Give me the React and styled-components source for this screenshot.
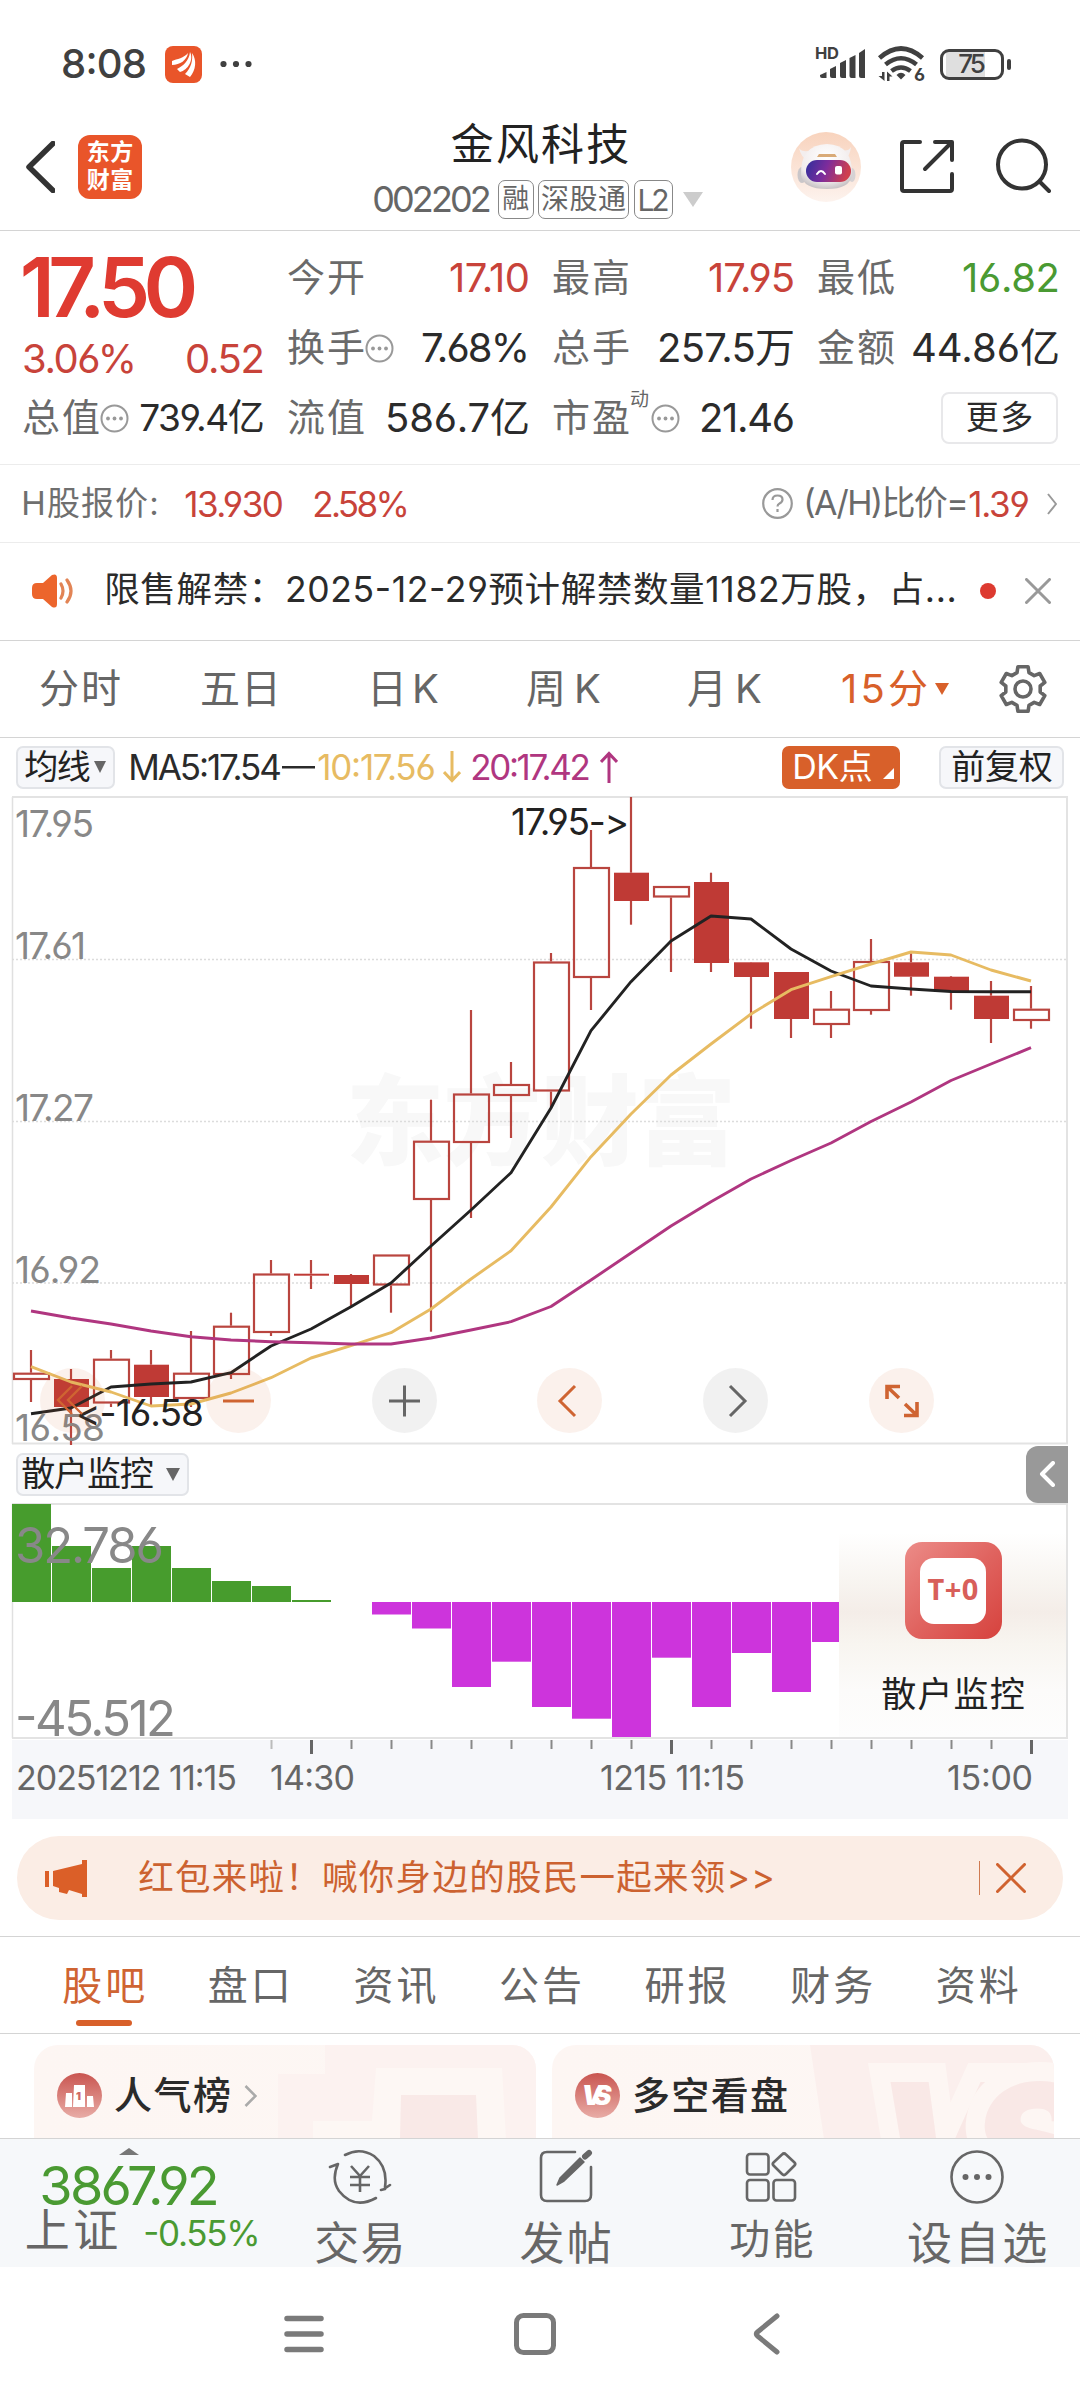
import React, { useLayoutEffect, useRef, useState } from 'react'
import styled, { createGlobalStyle, css } from 'styled-components'

const FONT = `Inter, "Noto Sans CJK SC", sans-serif`
const RED = '#c8433a'
const GREEN = '#4a9a32'
const ORANGE = '#d8602a'
const GREY = '#666'
const DARK = '#2b2b2b'
const UP = '#b9453f'
const SOLID = '#bf3a35'

const GlobalStyle = createGlobalStyle`
  * { box-sizing: border-box; }
  body { margin: 0; background: #fff; }
  svg { display: block; flex: none; }
`

/* ---------- text that spaces itself to the width of its slot ---------- */

const Slot = styled.span`
  display: block;
  flex: none;
  width: ${p => p.$w}px;
  height: 1.2em;
  line-height: 1.2em;
  font-size: ${p => p.$size}px;
  font-weight: ${p => p.$weight || 400};
  color: ${p => p.$color || GREY};
  white-space: nowrap;
`
const SlotText = styled.span`
  display: inline-block;
  margin-left: -0.05em;
`

function Fit({ w, size, color, weight, children, className }) {
  const ref = useRef(null)
  const [spacing, setSpacing] = useState(0)
  useLayoutEffect(() => {
    const el = ref.current
    el.style.letterSpacing = '0px'
    const natural = el.getBoundingClientRect().width
    const n = [...children].length
    const next = (w + size * 0.1 - natural) / Math.max(1, n - 1)
    el.style.letterSpacing = `${next}px`
    setSpacing(next)
  }, [w, size, children])
  return (
    <Slot className={className} $w={w} $size={size} $color={color} $weight={weight}>
      <SlotText ref={ref} style={{ letterSpacing: spacing }}>{children}</SlotText>
    </Slot>
  )
}

const Page = styled.div`
  width: 1080px;
  height: 2400px;
  overflow: hidden;
  display: flex;
  flex-direction: column;
  background: #fff;
  font-family: ${FONT};
  font-feature-settings: "calt" 1, "cv03" 1, "cv04" 1;
`

/* ---------- status bar ---------- */

const StatusRow = styled.div`
  height: 120px;
  padding: 8px 69px 0 63px;
  display: flex;
  align-items: center;
`
const AppIcon = styled.svg`
  margin: 0 18px 0 20px;
`
const Spacer = styled.div`
  flex: 1;
`
const Battery = styled.div`
  width: 64px;
  height: 31px;
  margin-left: 15px;
  border: 3.5px solid #404040;
  border-radius: 9px;
  display: flex;
  align-items: center;
  justify-content: center;
  background: linear-gradient(90deg, #fff 3px, #dfdfdf 3px, #dfdfdf 42px, #fff 42px);
`
const BatteryCap = styled.div`
  width: 4px;
  height: 11px;
  margin-left: 3px;
  border-radius: 2px;
  background: #404040;
`

function StatusBar() {
  return (
    <StatusRow>
      <Fit w={82} size={40} color="#404040" weight={500}>8:08</Fit>
      <AppIcon width="37" height="37" viewBox="0 0 37 37">
        <rect width="37" height="37" rx="8" fill="#e9552a" />
        <path d="M7 15C12 13 19 12 23 7C22 14 15 19 7 19Z" fill="#fff" />
        <path d="M12 23C18 20 24 15 25 6C29 14 23 24 15 26Z" fill="#fff" />
        <path d="M20 28C26 22 28 15 27 7C32 14 31 24 25 31Z" fill="#fff" />
      </AppIcon>
      <svg width="32" height="8" viewBox="0 0 32 8" fill="#404040">
        <circle cx="3.5" cy="4" r="3.1" /><circle cx="16" cy="4" r="3.1" /><circle cx="28.5" cy="4" r="3.1" />
      </svg>
      <Spacer />
      <svg width="110" height="38" viewBox="816 46 110 38" fill="#404040">
        <text x="816" y="60" fontFamily={FONT} fontSize="16.5" fontWeight="700" textLength="24">HD</text>
        <path d="M821 76L827.5 73V79H823Q821 79 821 77Z" />
        <path d="M831 70L837 67V79H833Q831 79 831 77Z" />
        <path d="M841 64L847 61V79H843Q841 79 841 77Z" />
        <path d="M850.5 59L856.5 56V79H852.500Q850.500 79 850.500 77Z" />
        <path d="M860 54L866 50V79H862Q860 79 860 77Z" />
        <g fill="none" stroke="#404040" strokeWidth="4.6">
          <path d="M880.5 59Q902 40 923.500 59" />
          <path d="M886.500 65.500Q902 53 917.500 65.500" />
          <path d="M892.500 72Q902 65 911.500 72" />
        </g>
        <path d="M897.500 76Q902 71.500 906.500 76L902 80.500Z" />
        <path d="M883 73h2.500v9L879.500 77h3.500zM888 82V72.500l5.500 5H890.500V82z" />
        <text x="915" y="82" fontFamily={FONT} fontSize="18" fontWeight="700">6</text>
      </svg>
      <Battery><Fit w={25} size={26} color="#404040" weight={500}>75</Fit></Battery>
      <BatteryCap />
    </StatusRow>
  )
}

/* ---------- header ---------- */

const HeaderRow = styled.header`
  height: 111px;
  padding: 0 29px 0 26px;
  display: grid;
  grid-template-columns: 348px 331px 1fr;
  border-bottom: 1px solid #d4d4d4;
`
const HeaderLeft = styled.div`
  height: 94px;
  display: flex;
  align-items: center;
  gap: 23px;
`
const Brand = styled.div`
  width: 64px;
  height: 64px;
  border-radius: 12px;
  background: #e9552a;
  display: flex;
  flex-direction: column;
  align-items: center;
  justify-content: center;
`
const TitleBlock = styled.div`
  display: flex;
  flex-direction: column;
`
const StockName = styled(Fit)`
  margin: -1px 0 0 79px;
`
const CodeLine = styled.div`
  height: 40px;
  margin-top: 9px;
  display: flex;
  align-items: center;
`
const Tag = styled.div`
  width: ${p => p.$w}px;
  height: 39px;
  margin-left: ${p => p.$gap}px;
  border: 1.500px solid #888;
  border-radius: 7px;
  display: flex;
  align-items: center;
  justify-content: center;
`
const Triangle = styled.i`
  display: block;
  flex: none;
  border: ${p => p.$w / 2}px solid transparent;
  border-top: ${p => p.$h}px solid ${p => p.$color};
  border-bottom: 0;
  margin-left: ${p => p.$gap || 0}px;
`
const HeaderRight = styled.div`
  height: 94px;
  display: flex;
  align-items: center;
  justify-content: flex-end;
`

function Header() {
  return (
    <HeaderRow>
      <HeaderLeft>
        <svg width="29" height="52" viewBox="0 0 29 52">
          <path d="M27 2.500L3 26L27 49.500" fill="none" stroke="#333" strokeWidth="5.500" strokeLinecap="round" strokeLinejoin="round" />
        </svg>
        <Brand>
          <Fit w={44} size={23} color="#fff" weight={700}>东方</Fit>
          <Fit w={44} size={23} color="#fff" weight={700}>财富</Fit>
        </Brand>
      </HeaderLeft>
      <TitleBlock>
        <StockName w={174} size={43} color="#222">金风科技</StockName>
        <CodeLine>
          <Fit w={116} size={36} color={GREY}>002202</Fit>
          <Tag $w={36} $gap={8}><Fit w={25} size={27}>融</Fit></Tag>
          <Tag $w={91} $gap={4}><Fit w={82} size={28}>深股通</Fit></Tag>
          <Tag $w={39} $gap={5}><Fit w={29} size={30}>L2</Fit></Tag>
          <Triangle $w={21} $h={15} $color="#ccc" $gap={10} />
        </CodeLine>
      </TitleBlock>
      <HeaderRight>
        <svg width="70" height="70" viewBox="0 0 70 70">
          <defs>
            <linearGradient id="peach" x1="0" y1="0" x2="0" y2="1">
              <stop offset="0" stopColor="#f8d3bd" /><stop offset="1" stopColor="#fdf3ee" />
            </linearGradient>
            <linearGradient id="visor" x1="0" y1="0" x2="1" y2="0.2">
              <stop offset="0" stopColor="#2f2f9c" /><stop offset="0.5" stopColor="#7d2c9c" /><stop offset="1" stopColor="#cf3f4e" />
            </linearGradient>
            <radialGradient id="shell" cx="0.5" cy="0.3" r="0.7">
              <stop offset="0" stopColor="#fff" /><stop offset="0.75" stopColor="#f1ecec" /><stop offset="1" stopColor="#c9c4c6" />
            </radialGradient>
          </defs>
          <circle cx="35" cy="35" r="35" fill="url(#peach)" />
          <path d="M8 16Q10 25 16 28L24 17Q12 22 8 16ZM60 15Q59 24 54 27L46 17Q57 21 60 15Z" fill="#f3eeee" />
          <ellipse cx="11" cy="43" rx="4.500" ry="8" fill="#c9c6c9" />
          <ellipse cx="61" cy="43" rx="3.500" ry="7" fill="#d6d2d4" />
          <path d="M10 43Q9 13 36 12Q62 13 61 43Q59 57 36 57Q12 57 10 43Z" fill="url(#shell)" />
          <path d="M28 22h16l2 3H26z" fill="#d9ab78" />
          <rect x="15" y="28" width="45" height="22" rx="11" fill="url(#visor)" />
          <path d="M26 42q4-6 8 0" fill="none" stroke="#fff" strokeWidth="2" strokeLinecap="round" />
          <rect x="44" y="34" width="7" height="8.500" rx="2" fill="#fff" />
        </svg>
        <svg width="130" height="70" viewBox="861 132 130 70" fill="none" stroke="#333" strokeWidth="4" strokeLinecap="round" strokeLinejoin="round">
          <path d="M920 142H904Q902 142 902 144V189Q902 191 904 191H950Q952 191 952 189V174" />
          <path d="M935 142H952V160M951 143L925 169" />
        </svg>
        <svg width="60" height="70" viewBox="991 132 60 70" fill="none" stroke="#333" strokeWidth="4" strokeLinecap="round">
          <circle cx="1022" cy="164.500" r="24" /><path d="M1040 182L1049 191" />
        </svg>
      </HeaderRight>
    </HeaderRow>
  )
}

/* ---------- quote ---------- */

const QuoteGrid = styled.section`
  height: 234px;
  padding: 12px 22px 0 24px;
  display: flex;
  justify-content: space-between;
  border-bottom: 1px solid #ececec;
`
const QuoteCol = styled.div`
  width: 239px;
`
const Line = styled.div`
  height: ${p => p.$h || 70}px;
  display: flex;
  align-items: center;
  justify-content: space-between;
`
const LabelGroup = styled.div`
  display: flex;
  align-items: center;
  gap: 2px;
`
const Sup = styled.div`
  align-self: flex-start;
  margin: -6px 0 0 1px;
`
const MoreButton = styled.button`
  width: 117px;
  height: 52px;
  margin-left: auto;
  padding: 0;
  border: 2px solid #e8e8ea;
  border-radius: 8px;
  background: #fff;
  font: inherit;
  font-feature-settings: inherit;
  display: flex;
  align-items: center;
  justify-content: center;
`

const Dots = () => (
  <svg width="29" height="29" viewBox="0 0 29 29" fill="#999">
    <circle cx="14.500" cy="14.500" r="13" fill="none" stroke="#999" strokeWidth="2" />
    <circle cx="8" cy="14.500" r="1.900" /><circle cx="14.500" cy="14.500" r="1.900" /><circle cx="21" cy="14.500" r="1.900" />
  </svg>
)

function Item({ label, value, w, color = DARK, dots, sup, size = 40, h }) {
  return (
    <Line $h={h}>
      <LabelGroup>
        <Fit w={74} size={38} color="#6a6a6a">{label}</Fit>
        {sup && <Sup><Fit w={18} size={19}>{sup}</Fit></Sup>}
        {dots && <Dots />}
      </LabelGroup>
      <Fit w={w} size={size} color={color}>{value}</Fit>
    </Line>
  )
}

function Quote() {
  return (
    <QuoteGrid>
      <QuoteCol>
        <Line $h={90}><Fit w={170} size={83} color="#df3b31" weight={600}>17.50</Fit></Line>
        <Line $h={51}>
          <Fit w={111} size={40} color={RED}>3.06%</Fit>
          <Fit w={76} size={40} color={RED}>0.52</Fit>
        </Line>
        <Item label="总值" value="739.4亿" w={122} size={37} dots h={68} />
      </QuoteCol>
      <QuoteCol>
        <Item label="今开" value="17.10" w={77} color={RED} />
        <Item label="换手" value="7.68%" w={105} dots />
        <Item label="流值" value="586.7亿" w={141} />
      </QuoteCol>
      <QuoteCol>
        <Item label="最高" value="17.95" w={83} color={RED} />
        <Item label="总手" value="257.5万" w={134} />
        <Item label="市盈" value="21.46" w={92} sup="动" dots />
      </QuoteCol>
      <QuoteCol>
        <Item label="最低" value="16.82" w={94} color={GREEN} />
        <Item label="金额" value="44.86亿" w={145} />
        <Line><MoreButton><Fit w={64} size={33} color={DARK}>更多</Fit></MoreButton></Line>
      </QuoteCol>
    </QuoteGrid>
  )
}

const HShareRow = styled.div`
  height: 78px;
  padding: 0 23px;
  display: flex;
  align-items: center;
  border-bottom: 1px solid #ececec;
`
const Gap = styled.div`
  flex: none;
  width: ${p => p.$w}px;
`

function HShare() {
  return (
    <HShareRow>
      <Fit w={134} size={33} color="#6f6f6f">H股报价:</Fit>
      <Gap $w={29} />
      <Fit w={96} size={35} color={RED}>13.930</Fit>
      <Gap $w={32} />
      <Fit w={94} size={35} color={RED}>2.58%</Fit>
      <Spacer />
      <svg width="31" height="31" viewBox="0 0 31 31" fill="none" stroke="#999" strokeWidth="2.200">
        <circle cx="15.500" cy="15.500" r="14.300" />
        <path d="M10.500 12Q10.500 7.500 15.500 7.500Q20.500 7.500 20.500 11.500Q20.500 14 17.500 15.500Q15.500 16.500 15.500 18.500M15.500 21V24" />
      </svg>
      <Gap $w={12} />
      <Fit w={162} size={34} color="#6a6a6a">(A/H)比价=</Fit>
      <Gap $w={3} />
      <Fit w={58} size={35} color={RED}>1.39</Fit>
      <Gap $w={19} />
      <svg width="10" height="22" viewBox="0 0 10 22">
        <path d="M1 1L9 11L1 21" fill="none" stroke="#999" strokeWidth="2" />
      </svg>
    </HShareRow>
  )
}

const NoticeRow = styled.div`
  height: 98px;
  padding: 0 29px 2px 32px;
  display: flex;
  align-items: center;
  border-bottom: 1px solid #d4d4d4;
`
const RedDot = styled.div`
  width: 16px;
  height: 16px;
  margin: 0 29px 0 25px;
  border-radius: 50%;
  background: #dd3a30;
`

function Notice() {
  return (
    <NoticeRow>
      <svg width="41" height="34" viewBox="0 0 41 34">
        <path d="M5 9H11L20 1Q25 -1 25 4V30Q25 35 20 33L11 25H5Q0 25 0 20V14Q0 9 5 9Z" fill="#ec652c" />
        <path d="M29 10Q33 17 29 24M35 6Q43 17 35 28" fill="none" stroke="#e28455" strokeWidth="3.200" strokeLinecap="round" />
      </svg>
      <Gap $w={33} />
      <Fit w={849} size={35.5} color={DARK}>限售解禁：2025-12-29预计解禁数量1182万股，占...</Fit>
      <RedDot />
      <svg width="26" height="26" viewBox="0 0 26 26">
        <path d="M1.500 1.500L24.500 24.500M24.500 1.500L1.500 24.500" stroke="#999" strokeWidth="3" strokeLinecap="round" />
      </svg>
    </NoticeRow>
  )
}

/* ---------- period tabs ---------- */

const PeriodRow = styled.nav`
  height: 97px;
  padding: 0 33px 0 41px;
  display: flex;
  align-items: center;
  border-bottom: 1px solid #d4d4d4;
`

const gear = (() => {
  const pts = []
  for (let k = 0; k < 6; k++) {
    ;[[-20, 17.5], [-13, 22.8], [13, 22.8], [20, 17.5]].forEach(([d, r]) => {
      const a = ((k * 60 - 90 + d) * Math.PI) / 180
      pts.push(`${(24 + r * Math.cos(a)).toFixed(1)},${(24 + r * Math.sin(a)).toFixed(1)}`)
    })
  }
  return pts.join(' ')
})()

function Periods() {
  return (
    <PeriodRow>
      <Fit w={78} size={40}>分时</Fit><Gap $w={83} />
      <Fit w={77} size={40}>五日</Fit><Gap $w={90} />
      <Fit w={68} size={40}>日K</Fit><Gap $w={91} />
      <Fit w={71} size={40}>周K</Fit><Gap $w={90} />
      <Fit w={71} size={40}>月K</Fit><Gap $w={83} />
      <Fit w={83} size={40} color={ORANGE}>15分</Fit>
      <Triangle $w={14} $h={12} $color={ORANGE} $gap={9} />
      <Spacer />
      <svg width="48" height="48" viewBox="0 0 48 48" fill="none" stroke={GREY} strokeWidth="3.600" strokeLinejoin="round">
        <polygon points={gear} /><circle cx="24" cy="24" r="8" />
      </svg>
    </PeriodRow>
  )
}

/* ---------- main chart ---------- */

const MaRow = styled.div`
  height: 58px;
  padding: 0 16px;
  display: flex;
  align-items: center;
`
const chip = css`
  height: 43px;
  flex: none;
  border-radius: 7px;
  display: flex;
  align-items: center;
  width: ${p => p.$w}px;
  padding-left: ${p => p.$pad}px;
`
const Chip = styled.div`
  ${chip}
  border: 2px solid #e2e4e8;
  background: #f6f7fa;
`
const DkChip = styled.div`
  ${chip}
  background: ${ORANGE};
`
const Corner = styled.i`
  margin: 12px 0 0 12px;
  border-left: 11px solid transparent;
  border-bottom: 11px solid #fff;
`

const MaArrow = ({ up, color }) => (
  <svg width="18" height="32" viewBox="0 0 18 32" fill="none" stroke={color} strokeWidth="3">
    <path d={up ? 'M9 32V2M1 11L9 2.500L17 11' : 'M9 0V30M1 21L9 29.500L17 21'} />
  </svg>
)

function MaBar() {
  return (
    <MaRow>
      <Chip $w={99} $pad={8}>
        <Fit w={63} size={34} color="#222">均线</Fit>
        <Triangle $w={13} $h={12} $color={GREY} $gap={5} />
      </Chip>
      <Gap $w={15} />
      <Fit w={150} size={35} color={DARK}>MA5:17.54</Fit>
      <svg width="36" height="4"><rect x="2" y="1" width="33" height="2.500" fill="#2b2b2b" /></svg>
      <Gap $w={3} />
      <Fit w={115} size={35} color="#e7bb62">10:17.56</Fit>
      <Gap $w={9} /><MaArrow color="#e7bb62" /><Gap $w={11} />
      <Fit w={117} size={35} color="#b03680">20:17.42</Fit>
      <Gap $w={11} /><MaArrow up color="#b03680" />
      <Spacer />
      <DkChip $w={118} $pad={12}>
        <Fit w={77} size={34} color="#fff">DK点</Fit>
        <Corner />
      </DkChip>
      <Gap $w={39} />
      <Chip $w={125} $pad={12}><Fit w={98} size={34} color="#222">前复权</Fit></Chip>
    </MaRow>
  )
}

// [body top, body bottom, high, low, solid]
const CANDLES = [
  [1372.7, 1380, 1350, 1402, 0], [1379, 1407, 1369, 1445, 1], [1358.7, 1403.5, 1350, 1407, 0],
  [1364.7, 1397, 1350, 1405, 1], [1372.7, 1399, 1331, 1407, 0], [1325.7, 1375, 1312.7, 1379, 0],
  [1273.5, 1333, 1260, 1336, 0], [1273.7, 1275.7, 1260, 1289, 1], [1275, 1284, 1274, 1307, 1],
  [1254.5, 1285.5, 1254.5, 1312.7, 0], [1140.7, 1200, 1099.7, 1331.7, 0], [1093.5, 1143, 1010, 1218, 0],
  [1084, 1096, 1062, 1138, 0], [961.5, 1091.5, 953, 1108, 0], [867, 978, 830, 1010, 0],
  [872.7, 901, 797, 924.7, 1], [886, 897.5, 886, 972, 0], [882, 963, 872.7, 972, 1],
  [962.3, 977, 962, 1028.7, 1], [972, 1019, 972, 1038, 1], [1008.7, 1025, 991, 1038, 0],
  [961, 1011, 939, 1014.7, 0], [962.3, 976.7, 953.3, 995.7, 1], [976.7, 991, 976, 1009.7, 1],
  [995.7, 1019, 981, 1043, 1], [1008.7, 1021, 986, 1028.7, 0],
]
const MA5 = [1413.7, 1408, 1387, 1384, 1382, 1372.7, 1346, 1329, 1306.7, 1283, 1246, 1210, 1172.7, 1108, 1030.7, 981.7, 941, 916, 919, 949, 971, 986, 989, 991.5, 991.7, 991.7]
const MA10 = [1366.7, 1382, 1392, 1406, 1404, 1393, 1377.7, 1358, 1345.7, 1332.7, 1309, 1279, 1250.7, 1207, 1156.7, 1114, 1075, 1044, 1014, 989.7, 976.7, 964, 952, 955, 970, 981]
const MA20 = [1311, 1318, 1324, 1331, 1336.7, 1340, 1341.7, 1342.7, 1344, 1344, 1338, 1330, 1321.7, 1306.5, 1280, 1253, 1226, 1201.7, 1179, 1160.5, 1143, 1121.5, 1102, 1080.5, 1064, 1047.7]
const cx = i => 31 + 40 * i
const line = ys => ys.map((y, i) => `${cx(i)},${y}`).join(' ')

const ChartBox = styled.div`
  position: relative;
  height: 649px;
`
const AxisText = styled.text`
  font-family: ${FONT};
  font-size: ${p => p.$size || 37}px;
  font-feature-settings: "calt" ${p => (p.$plain ? 0 : 1)}, "cv03" 1, "cv04" 1;
  fill: ${p => p.$fill || '#888'};
`
const Watermark = styled.text`
  font-family: "Noto Sans CJK SC", sans-serif;
  font-size: 98px;
  font-weight: 900;
  fill: #f8f8f8;
`
const Tools = styled.div`
  position: absolute;
  left: 40px;
  top: 572px;
  display: flex;
  gap: 100.8px;
`
const Tool = styled.div`
  width: 65px;
  height: 65px;
  border-radius: 50%;
  background: ${p => (p.$warm ? 'rgba(216, 96, 42, 0.09)' : 'rgba(0, 0, 0, 0.055)')};
  color: ${p => (p.$warm ? '#cf6432' : GREY)};
`

const TOOLS = [
  [1, 'M32 18L18 32L32 46M42 18L28 32L42 46', 2.4],
  [1, 'M17 33H48', 3],
  [0, 'M17 33H48M32.500 17.500V48.500', 3],
  [1, 'M38 18L23 33L38 48', 3],
  [0, 'M27 18L42 33L27 48', 3],
  [1, 'M18 31V18.500H31M19 19.500L30 30M48 34V47.500H35M47 46.500L36 36', 3.6],
]

function CandleChart() {
  return (
    <ChartBox>
      <svg width="1080" height="649" viewBox="0 796 1080 649">
        <Watermark x="346" y="1157" textLength="390">东方财富</Watermark>
        <path d="M12.500 797V1444" stroke="#e0e0e0" strokeWidth="1.500" />
        <path d="M12 797H1067V1443.500H12" fill="none" stroke="#e3e3e3" strokeWidth="2" />
        <path d="M12 959.500H1067M12 1121.500H1067M12 1283H1067" stroke="#dcdcdc" strokeWidth="1.300" strokeDasharray="2 2" />
        {CANDLES.map(([t, b, hi, lo, solid], i) => (
          <g key={i}>
            {hi < t && <path d={`M${cx(i)} ${hi}V${t}`} stroke={UP} strokeWidth="2.200" />}
            {lo > b && <path d={`M${cx(i)} ${b}V${lo}`} stroke={UP} strokeWidth="2.200" />}
            {solid
              ? <rect x={cx(i) - 17} y={t} width="35" height={b - t} fill={SOLID} />
              : <rect x={cx(i) - 17} y={t + 1} width="35" height={b - t - 2} fill="none" stroke={UP} strokeWidth="2.200" />}
          </g>
        ))}
        <AxisText x="15" y="837" textLength="79">17.95</AxisText>
        <AxisText x="15" y="959" textLength="71">17.61</AxisText>
        <AxisText x="15" y="1121" textLength="79">17.27</AxisText>
        <AxisText x="15" y="1283" textLength="86">16.92</AxisText>
        <AxisText x="15" y="1441" textLength="90">16.58</AxisText>
        <g fill="none" strokeWidth="2.900" strokeLinejoin="round">
          <polyline points={line(MA5)} stroke="#222" />
          <polyline points={line(MA10)} stroke="#e7bb62" />
          <polyline points={line(MA20)} stroke="#b03680" />
        </g>
        <AxisText $plain x="511" y="835" textLength="118" $fill="#222">17.95-&gt;</AxisText>
        <AxisText $plain x="76" y="1426" textLength="128" $fill="#222">&lt;-16.58</AxisText>
      </svg>
      <Tools>
        {TOOLS.map(([warm, d, sw], i) => (
          <Tool key={i} $warm={warm}>
            <svg width="65" height="65" viewBox="0 0 65 65" fill="none" stroke="currentColor" strokeWidth={sw}><path d={d} /></svg>
          </Tool>
        ))}
      </Tools>
    </ChartBox>
  )
}

/* ---------- sub chart ---------- */

const SubRow = styled.div`
  height: 58px;
  padding: 0 12px 0 16px;
  display: flex;
  align-items: center;
  justify-content: space-between;
`
const Collapse = styled.div`
  width: 42px;
  height: 57px;
  border-radius: 12px 0 0 12px;
  background: #999;
  display: flex;
  align-items: center;
  justify-content: center;
`
const BARS = [1504, 1546, 1568, 1546, 1568, 1581, 1586, 1600, 1602, 1614.5, 1628.5, 1687, 1661.7, 1707, 1718.7, 1737, 1657.7, 1707, 1653, 1692, 1642]
const ZERO = 1602

const SubChartBox = styled.div`
  position: relative;
  height: 237px;
`
const Promo = styled.div`
  position: absolute;
  left: 839px;
  top: 2px;
  width: 227px;
  height: 232px;
  padding-top: 37px;
  display: flex;
  flex-direction: column;
  align-items: center;
  background: linear-gradient(180deg, #fff 12%, #f8f5f1 32%, #f4ede8 46%, #f8f5f0 60%, #fcfbfa 80%, #fdfdfd);
`
const PromoIcon = styled.div`
  width: 97px;
  height: 97px;
  margin: 0 0 34px 1px;
  border-radius: 17px;
  background: linear-gradient(135deg, #ec8c88, #e06460 50%, #d6423d);
  display: flex;
  align-items: center;
  justify-content: center;
`
const PromoInner = styled.div`
  width: 66px;
  height: 66px;
  padding-bottom: 2px;
  border-radius: 14px;
  background: #fff;
  display: flex;
  align-items: center;
  justify-content: center;
  font-family: "Noto Sans", sans-serif;
`
const PromoText = styled(Fit)`
  margin-left: 1px;
`

function SubChart() {
  return (
    <>
      <SubRow>
        <Chip $w={173} $pad={5}>
          <Fit w={129} size={34} color="#222">散户监控</Fit>
          <Triangle $w={14} $h={13} $color={GREY} $gap={14} />
        </Chip>
        <Collapse>
          <svg width="16" height="26" viewBox="0 0 16 26"><path d="M14 2L3 13L14 24" fill="none" stroke="#fff" strokeWidth="4" strokeLinecap="round" strokeLinejoin="round" /></svg>
        </Collapse>
      </SubRow>
      <SubChartBox>
        <svg width="1080" height="237" viewBox="0 1503 1080 237">
          <path d="M12 1504H1067V1738H12" fill="none" stroke="#e3e3e3" strokeWidth="2" />
          <path d="M12.500 1504V1738" stroke="#e0e0e0" strokeWidth="1.500" />
          {BARS.map((y, i) => (
            <rect key={i} x={12 + 40 * i} width="39" y={Math.min(y, ZERO)} height={Math.abs(y - ZERO)} fill={y < ZERO ? '#479c2d' : '#cd34dc'} />
          ))}
          <AxisText x="15" y="1563" textLength="149" $size={49}>32.786</AxisText>
          <AxisText x="15" y="1736" textLength="161" $size={49}>-45.512</AxisText>
        </svg>
        <Promo>
          <PromoIcon><PromoInner><Fit w={48} size={29} color="#d85f5a" weight={700}>T+0</Fit></PromoInner></PromoIcon>
          <PromoText w={140} size={35} color="#222">散户监控</PromoText>
        </Promo>
      </SubChartBox>
    </>
  )
}

const AxisBox = styled.div`
  height: 79px;
  margin: 0 12px;
  background: #f6f7fa;
`

function TimeAxis() {
  const ticks = Array.from({ length: 20 }, (_, k) => k + 6)
  const long = [7, 16, 25]
  return (
    <AxisBox>
      <svg width="1056" height="79" viewBox="12 1740 1056 79">
        {ticks.map(i => (
          <path key={i} d={`M${cx(i) + 0.5} 1740v${long.includes(i) ? 14 : 9}`} stroke={i === 6 ? '#bbb' : long.includes(i) ? '#666' : '#888'} strokeWidth={long.includes(i) ? 3 : 2} />
        ))}
        <AxisText x="16" y="1790" textLength="221" $size={34} $fill="#666">20251212 11:15</AxisText>
        <AxisText x="270" y="1790" textLength="85" $size={34} $fill="#666">14:30</AxisText>
        <AxisText x="600" y="1790" textLength="145" $size={34} $fill="#666">1215 11:15</AxisText>
        <AxisText x="947" y="1790" textLength="86" $size={34} $fill="#666">15:00</AxisText>
      </svg>
    </AxisBox>
  )
}

/* ---------- banner, sections, cards ---------- */

const BannerBox = styled.div`
  height: 84px;
  margin: 17px 17px 16px;
  padding: 0 37px 0 28px;
  border-radius: 42px;
  background: #fbede5;
  display: flex;
  align-items: center;
`
const Divider = styled.div`
  width: 1px;
  height: 34px;
  margin-right: 16px;
  background: #cf7a50;
`

function Banner() {
  return (
    <BannerBox>
      <svg width="42" height="37" viewBox="0 0 42 37" fill="#db5f28">
        <path d="M0 11H4V27H0ZM8 11L37 4V0H42V37H37V34L24 30L22 34L14 32V28L8 26Z" />
      </svg>
      <Gap $w={53} />
      <Fit w={633} size={35.5} color="#cc6230">红包来啦！喊你身边的股民一起来领&gt;&gt;</Fit>
      <Spacer />
      <Divider />
      <svg width="30" height="30" viewBox="0 0 30 30">
        <path d="M1.500 1.500L28.500 28.500M28.500 1.500L1.500 28.500" stroke="#d0622f" strokeWidth="3" strokeLinecap="round" />
      </svg>
    </BannerBox>
  )
}

const SectionRow = styled.nav`
  height: 98px;
  padding: 0 30px 0 31px;
  border-top: 1px solid #d4d4d4;
  border-bottom: 1px solid #d4d4d4;
  display: flex;
`
const Section = styled.div`
  flex: 1;
  padding-top: 25px;
  display: flex;
  flex-direction: column;
  align-items: center;
  &::after {
    content: '';
    width: 56px;
    height: 6px;
    margin-top: 10px;
    border-radius: 3px;
    background: ${p => (p.$on ? ORANGE : 'transparent')};
  }
`
const SECTIONS = ['股吧', '盘口', '资讯', '公告', '研报', '财务', '资料']

const CardRow = styled.div`
  height: 104px;
  padding: 11px 26px 0 34px;
  display: flex;
  gap: 16px;
  overflow: hidden;
`
const Card = styled.div`
  position: relative;
  width: 502px;
  height: 120px;
  padding: 28px 0 0 23px;
  border-radius: 24px;
  background: linear-gradient(90deg, #fdf6f3, #fdf7f4);
  overflow: hidden;
  display: flex;
  align-items: flex-start;
`
const CardArt = styled.svg`
  position: absolute;
  right: 0;
  top: 0;
`
const CardTitle = styled(Fit)`
  margin: 0 15px 0 14px;
`
const CardArrow = styled.svg`
  margin-top: 12px;
`
const VsText = styled.text`
  font-family: Inter, sans-serif;
  font-weight: 900;
  font-style: ${p => (p.$flat ? 'normal' : 'italic')};
  font-size: ${p => p.$size}px;
`

function Cards() {
  return (
    <CardRow>
      <Card>
        <CardArt width="260" height="94" viewBox="242 0 260 94">
          <path d="M244 94V29H291V0H502V94Z" fill="#fcf2f0" />
          <path d="M279 94V76H338L342 23H468L472 94Z" fill="#fdf7f4" />
          <path d="M366 94L367 50H442L444 94Z" fill="#f9e9e7" />
        </CardArt>
        <svg width="45" height="45" viewBox="0 0 45 45">
          <defs>
            <linearGradient id="badge" x1="0" y1="0" x2="0" y2="1"><stop offset="0" stopColor="#c95550" /><stop offset="1" stopColor="#e8aca6" /></linearGradient>
          </defs>
          <circle cx="22.500" cy="22.500" r="22.500" fill="url(#badge)" />
          <path d="M9 20H15V34H8ZM17 12H28V34H16ZM30 23H36L37 34H30Z" fill="#fff" />
          <VsText $flat $size={11} x="19" y="27" fill="#cf6a64">1</VsText>
        </svg>
        <CardTitle w={113} size={38} color={DARK} weight={500}>人气榜</CardTitle>
        <CardArrow width="13" height="22" viewBox="0 0 13 22">
          <path d="M1.500 1L11.500 11L1.500 21" fill="none" stroke="#aaa" strokeWidth="2.500" />
        </CardArrow>
      </Card>
      <Card>
        <CardArt width="260" height="94" viewBox="242 0 260 94">
          <path d="M258 0H502V94H272Z" fill="#fbefed" />
          <VsText $size={170} x="322" y="161" fill="#f9e8e6" stroke="#fdf6f3" strokeWidth="38" paintOrder="stroke" textLength="210">VS</VsText>
        </CardArt>
        <svg width="45" height="45" viewBox="0 0 45 45">
          <circle cx="22.500" cy="22.500" r="22.500" fill="url(#badge)" />
          <VsText $size={27} x="6.500" y="32" textLength="30" fill="#fff">VS</VsText>
        </svg>
        <CardTitle w={152} size={38} color={DARK} weight={500}>多空看盘</CardTitle>
      </Card>
    </CardRow>
  )
}

/* ---------- bottom bars ---------- */

const BottomBar = styled.div`
  height: 129px;
  border-top: 1px solid #d4d4d4;
  background: #f6f8fa;
  display: flex;
`
const IndexBox = styled.div`
  width: 257px;
  padding: 9px 0 0 27px;
`
const UpMark = styled.i`
  display: block;
  width: 0;
  margin-left: 92px;
  border: 10px solid transparent;
  border-top: 0;
  border-bottom: 7px solid #777;
`
const IndexValue = styled(Fit)`
  margin: -1px 0 -12px 15px;
`
const IndexLine = styled.div`
  height: 53px;
  display: flex;
  align-items: center;
`
const IndexName = styled(Fit)`
  margin-top: -4px;
`
const Action = styled.div`
  flex: 1;
  padding-top: 10px;
  display: flex;
  flex-direction: column;
  align-items: center;
`
const ActionLabel = styled(Fit)`
  margin-top: ${p => (p.size > 42 ? 12 : 10)}px;
`
const ActionIcon = ({ children }) => (
  <svg width="64" height="56" viewBox="0 0 64 56" fill="none" stroke="#666" strokeWidth="2.600" strokeLinecap="round" strokeLinejoin="round">
    {children}
  </svg>
)

function Bottom() {
  return (
    <BottomBar>
      <IndexBox>
        <UpMark />
        <IndexValue w={175} size={54} color={GREEN}>3867.92</IndexValue>
        <IndexLine>
          <IndexName w={89} size={45}>上证</IndexName>
          <Gap $w={29} />
          <Fit w={114} size={35} color={GREEN}>-0.55%</Fit>
        </IndexLine>
      </IndexBox>
      <Action>
        <ActionIcon>
          <path d="M17 6Q32 -2 46 7Q60 18 57 38M2 18L10 15Q3 31 11 42Q26 61 48 49M56 40L62 36M57 40L53 41" />
          <path d="M23 17L32 27L41 17M32 27V43M22 28H42M22 36H42" strokeLinecap="butt" />
        </ActionIcon>
        <ActionLabel w={87} size={45}>交易</ActionLabel>
      </Action>
      <Action>
        <ActionIcon>
          <path d="M41 3H13Q7 3 7 9V46Q7 52 13 52H51Q57 52 57 46V18" />
          <path d="M23 36L26 29L46 9L50 13L30 32Z" fill="#666" strokeWidth="1.500" />
          <path d="M51 7.500L55 4" strokeWidth="6" />
        </ActionIcon>
        <ActionLabel w={88} size={45}>发帖</ActionLabel>
      </Action>
      <Action>
        <ActionIcon>
          <rect x="8" y="5" width="21.500" height="20.500" rx="3" />
          <rect x="8" y="31" width="21.500" height="20.500" rx="3" />
          <rect x="34.500" y="31" width="21.500" height="20.500" rx="3" />
          <path d="M43 5.500Q45 3.500 47 5.500L55.500 13.500Q57 15 55.500 16.500L47 25Q45 27 43 25L34.500 16.500Q33 15 34.500 13.500Z" />
        </ActionIcon>
        <ActionLabel w={80} size={41}>功能</ActionLabel>
      </Action>
      <Action>
        <ActionIcon>
          <circle cx="32" cy="28" r="25.500" />
          <g fill="#666" stroke="none"><circle cx="20.500" cy="28" r="3" /><circle cx="32" cy="28" r="3" /><circle cx="43.500" cy="28" r="3" /></g>
        </ActionIcon>
        <ActionLabel w={136} size={45}>设自选</ActionLabel>
      </Action>
    </BottomBar>
  )
}

const SystemNav = styled.div`
  height: 133px;
  padding-left: 284px;
  display: flex;
  align-items: center;
`

function SystemBar() {
  return (
    <SystemNav>
      <svg width="40" height="42" viewBox="0 0 40 42" stroke="#7a7a7a" strokeWidth="5.500" strokeLinecap="round">
        <path d="M3 5.500H37M3 21H37M3 36.500H37" />
      </svg>
      <Gap $w={190} />
      <svg width="42" height="42" viewBox="0 0 42 42">
        <rect x="2.500" y="2.500" width="37" height="37" rx="7" fill="none" stroke="#7a7a7a" strokeWidth="5" />
      </svg>
      <Gap $w={197} />
      <svg width="27" height="42" viewBox="0 0 27 42">
        <path d="M24 3L4.500 19Q2 21 4.500 23L24 39" fill="none" stroke="#7a7a7a" strokeWidth="5" strokeLinecap="round" />
      </svg>
    </SystemNav>
  )
}

export default function App() {
  return (
    <Page>
      <GlobalStyle />
      <StatusBar />
      <Header />
      <Quote />
      <HShare />
      <Notice />
      <Periods />
      <MaBar />
      <CandleChart />
      <SubChart />
      <TimeAxis />
      <Banner />
      <SectionRow>
        {SECTIONS.map((s, i) => (
          <Section key={s} $on={i === 0}>
            <Fit w={79} size={40} color={i === 0 ? '#cf6432' : GREY}>{s}</Fit>
          </Section>
        ))}
      </SectionRow>
      <Cards />
      <Bottom />
      <SystemBar />
    </Page>
  )
}
